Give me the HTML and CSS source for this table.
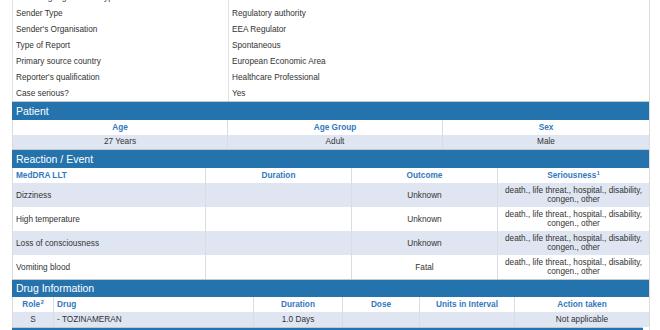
FILE: index.html
```html
<!DOCTYPE html>
<html>
<head>
<meta charset="utf-8">
<link rel="stylesheet" href="styles.css">
</head>
<body>
<div class="page">
  <div class="kv">
    <div class="k">Receiving organisation type</div><div class="v"></div>
    <div class="k">Sender Type</div><div class="v">Regulatory authority</div>
    <div class="k">Sender's Organisation</div><div class="v">EEA Regulator</div>
    <div class="k">Type of Report</div><div class="v">Spontaneous</div>
    <div class="k">Primary source country</div><div class="v">European Economic Area</div>
    <div class="k">Reporter's qualification</div><div class="v">Healthcare Professional</div>
    <div class="k">Case serious?</div><div class="v">Yes</div>
  </div>

  <div class="sec-head">Patient</div>
  <div class="tbl">
    <div class="row cols-patient head">
      <div class="cell center">Age</div>
      <div class="cell center">Age Group</div>
      <div class="cell center">Sex</div>
    </div>
    <div class="row cols-patient alt short">
      <div class="cell center">27 Years</div>
      <div class="cell center">Adult</div>
      <div class="cell center">Male</div>
    </div>
  </div>

  <div class="sec-head">Reaction / Event</div>
  <div class="tbl">
    <div class="row cols-reaction head">
      <div class="cell">MedDRA LLT</div>
      <div class="cell center">Duration</div>
      <div class="cell center">Outcome</div>
      <div class="cell center"><span>Seriousness<sup class="sup">1</sup></span></div>
    </div>
    <div class="row cols-reaction alt">
      <div class="cell">Dizziness</div>
      <div class="cell center"></div>
      <div class="cell center">Unknown</div>
      <div class="cell center">death., life threat., hospital., disability,<br>congen., other</div>
    </div>
    <div class="row cols-reaction">
      <div class="cell">High temperature</div>
      <div class="cell center"></div>
      <div class="cell center">Unknown</div>
      <div class="cell center">death., life threat., hospital., disability,<br>congen., other</div>
    </div>
    <div class="row cols-reaction alt">
      <div class="cell">Loss of consciousness</div>
      <div class="cell center"></div>
      <div class="cell center">Unknown</div>
      <div class="cell center">death., life threat., hospital., disability,<br>congen., other</div>
    </div>
    <div class="row cols-reaction">
      <div class="cell">Vomiting blood</div>
      <div class="cell center"></div>
      <div class="cell center">Fatal</div>
      <div class="cell center">death., life threat., hospital., disability,<br>congen., other</div>
    </div>
  </div>

  <div class="sec-head slim">Drug Information</div>
  <div class="tbl">
    <div class="row cols-drug head">
      <div class="cell center"><span>Role<sup class="sup">2</sup></span></div>
      <div class="cell">Drug</div>
      <div class="cell center">Duration</div>
      <div class="cell center">Dose</div>
      <div class="cell center">Units in Interval</div>
      <div class="cell center">Action taken</div>
    </div>
    <div class="row cols-drug alt">
      <div class="cell center">S</div>
      <div class="cell">- TOZINAMERAN</div>
      <div class="cell center">1.0 Days</div>
      <div class="cell center"></div>
      <div class="cell center"></div>
      <div class="cell center">Not applicable</div>
    </div>
  </div>

  <div class="next-bar"></div>
</div>
</body>
</html>
```

FILE: styles.css
```css
* { box-sizing: border-box; }

html, body {
  margin: 0;
  padding: 0;
  background: #ffffff;
  overflow: hidden;
}

body {
  font-family: "Liberation Sans", Arial, sans-serif;
  color: #333333;
  font-size: 8.25px;
}

.page {
  margin: -11px 0 0 12px;
  width: 638px;
  min-height: 341px;
  border-right: 1px solid #dcdcdc;
}

.kv {
  display: grid;
  grid-template-columns: 215px 1fr;
  border-left: 1px solid #e2e2e2;
}

.kv .k,
.kv .v {
  height: 16px;
  line-height: 17px;
  padding: 0 3px;
  white-space: nowrap;
  overflow: hidden;
}

.kv .v {
  border-left: 1px solid #e2e2e2;
}

.sec-head {
  height: 19px;
  line-height: 18px;
  border-top: 1px solid #c3c8cc;
  background: #2473ad;
  color: #ffffff;
  font-size: 10.5px;
  padding-left: 4px;
}

.sec-head.slim {
  height: 18px;
  line-height: 17px;
}

.next-bar {
  width: 631px;
  height: 4px;
  border-top: 1px solid #c3c8cc;
  background: #2473ad;
}

.tbl {
  border-left: 1px solid #dcdcdc;
}

.row {
  display: grid;
  background: #ffffff;
}

.row.alt {
  background: #dfe6f2;
}

.cols-patient { grid-template-columns: 214px 215px 1fr; }
.cols-reaction { grid-template-columns: 192px 146px 146px 1fr; }
.cols-drug { grid-template-columns: 40px 200px 89px 77px 95px 1fr; }

.cell {
  display: flex;
  align-items: center;
  padding: 3px 3px;
  line-height: 9px;
  min-height: 15px;
}

.cell + .cell {
  border-left: 1px solid #d9dde3;
}

.cell.center {
  justify-content: center;
  text-align: center;
}

.row.short .cell {
  padding: 2px 3px 3px;
  min-height: 14px;
}

.row.head .cell {
  font-weight: bold;
  color: #3279bd;
}

.sup {
  font-size: 5.5px;
  line-height: 0;
  vertical-align: 3px;
  margin-left: 0.5px;
}
```
